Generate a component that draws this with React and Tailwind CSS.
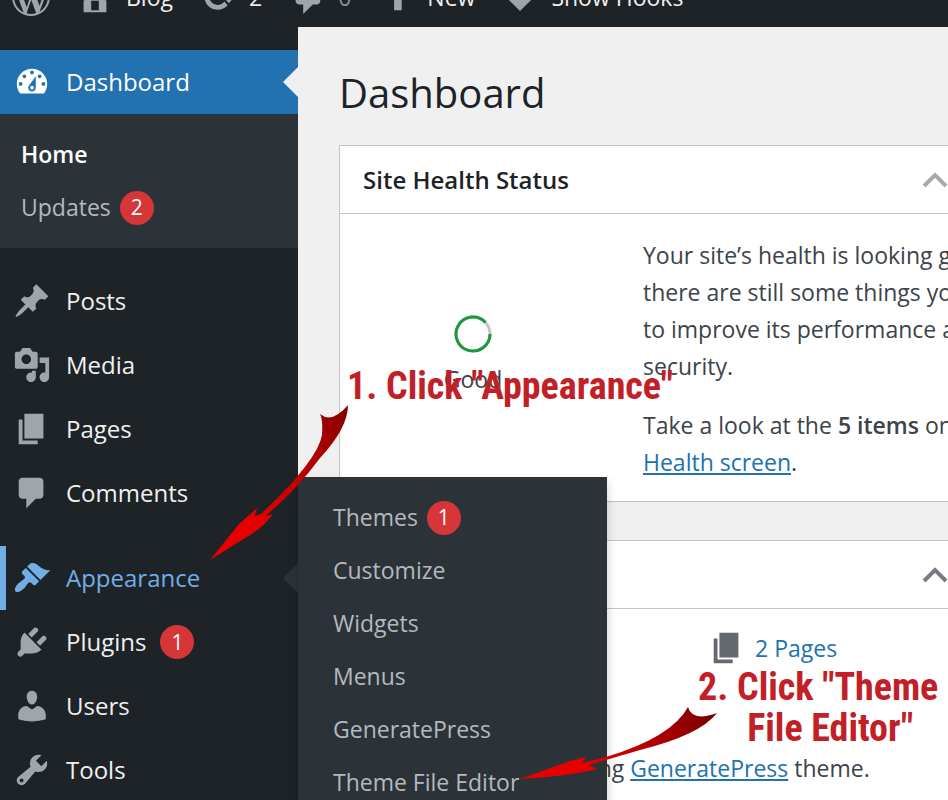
const ICONS = {
  wordpress:
    "M20 10c0-5.51-4.49-10-10-10C4.48 0 0 4.49 0 10c0 5.52 4.48 10 10 10 5.51 0 10-4.48 10-10zM7.78 15.37L4.37 6.22c.55-.02 1.17-.08 1.17-.08.5-.06.44-1.13-.06-1.11 0 0-1.45.11-2.37.11-.18 0-.37 0-.58-.01C4.12 2.69 6.87 1.11 10 1.11c2.33 0 4.45.87 6.05 2.34-.68-.11-1.65.39-1.65 1.58 0 .74.45 1.36.9 2.1.35.61.55 1.36.55 2.46 0 1.49-1.4 5-1.4 5l-3.03-8.37c.54-.02.82-.17.82-.17.5-.05.44-1.25-.06-1.22 0 0-1.44.12-2.38.12-.87 0-2.33-.12-2.33-.12-.5-.03-.56 1.2-.06 1.22l.92.08 1.26 3.41zM17.41 10c.24-.64.74-1.87.43-4.25.7 1.29 1.05 2.71 1.05 4.25 0 3.29-1.73 6.24-4.4 7.78.97-2.59 1.94-5.2 2.92-7.78zM6.1 18.09C3.12 16.65 1.11 13.53 1.11 10c0-1.3.23-2.48.72-3.59C3.25 10.3 4.67 14.2 6.1 18.09zm4.03-6.63l2.58 6.98c-.86.29-1.76.45-2.71.45-.79 0-1.57-.11-2.29-.33.81-2.38 1.62-4.74 2.42-7.1z",
  home: "M16 8.5l1.53 1.53-1.06 1.06L10 4.6l-6.47 6.49-1.06-1.06L10 2.5l4 4v-2h2v4zm-6-2.46l6 5.99V18H4v-5.97zM12 17v-5H8v5h4z",
  update:
    "M10.2 3.28c3.53 0 6.43 2.61 6.92 6h2.08l-3.5 4-3.5-4h2.32c-.45-1.97-2.21-3.45-4.32-3.45-1.45 0-2.73.71-3.54 1.78L4.95 5.66C6.23 4.2 8.11 3.28 10.2 3.28zm-.4 13.44c-3.52 0-6.43-2.61-6.92-6H.8l3.5-4c1.17 1.33 2.33 2.67 3.5 4H5.48c.45 1.97 2.21 3.45 4.32 3.45 1.45 0 2.73-.71 3.54-1.78l1.71 1.95c-1.28 1.46-3.15 2.38-5.25 2.38z",
  plus: "M17 7v3h-4v7H9v-7H4V7h5V2h4v5h4z",
  diamond: "M10 4.6L16.4 11 10 17.4 3.6 11z",
  barComment:
    "M6 3h9c1.1 0 2 .9 2 2v7c0 1.1-.9 2-2 2h-2l-5 5v-5H6c-1.1 0-2-.9-2-2V5c0-1.1.9-2 2-2z",
  dashboard:
    "M3.76 16h12.48c1.1-1.37 1.76-3.11 1.76-5 0-4.42-3.58-8-8-8s-8 3.58-8 8c0 1.89.66 3.63 1.76 5zM10 4c.55 0 1 .45 1 1s-.45 1-1 1-1-.45-1-1 .45-1 1-1zM6 6c.55 0 1 .45 1 1s-.45 1-1 1-1-.45-1-1 .45-1 1-1zm8 0c.55 0 1 .45 1 1s-.45 1-1 1-1-.45-1-1 .45-1 1-1zm-5.37 5.55L12 7v6c0 1.1-.9 2-2 2s-2-.9-2-2c0-.57.24-1.08.63-1.45zM4 10c.55 0 1 .45 1 1s-.45 1-1 1-1-.45-1-1 .45-1 1-1zm12 0c.55 0 1 .45 1 1s-.45 1-1 1-1-.45-1-1 .45-1 1-1zm-5 3c0-.55-.45-1-1-1s-1 .45-1 1 .45 1 1 1 1-.45 1-1z",
  post: "M10.44 3.02l1.82-1.82 6.36 6.35-1.83 1.82c-1.05-.68-2.48-.57-3.41.36l-.75.75c-.92.93-1.04 2.35-.35 3.41l-1.83 1.82-2.41-2.41-2.8 2.79c-.42.42-3.38 2.71-3.8 2.29s1.86-3.39 2.28-3.81l2.79-2.79L4.1 9.36l1.83-1.82c1.05.69 2.48.57 3.4-.36l.75-.75c.93-.92 1.05-2.35.36-3.41z",
  media:
    "M13 11V4c0-.55-.45-1-1-1h-1.67L9 1H5L3.67 3H2c-.55 0-1 .45-1 1v7c0 .55.45 1 1 1h10c.55 0 1-.45 1-1zM7 4.5c1.38 0 2.5 1.12 2.5 2.5S8.38 9.5 7 9.5 4.5 8.38 4.5 7 5.62 4.5 7 4.5zM14 6h5v10.5c0 1.38-1.12 2.5-2.5 2.5S14 17.88 14 16.5s1.12-2.5 2.5-2.5c.17 0 .34.02.5.05V9h-3V6zm-4 8.05V13h2v3.5c0 1.38-1.12 2.5-2.5 2.5S7 17.88 7 16.5 8.12 14 9.5 14c.17 0 .34.02.5.05z",
  page: "M6 15V2h10v13H6zm-1 1h8v2H3V5h2v11z",
  comment:
    "M5 2h9c1.1 0 2 .9 2 2v7c0 1.1-.9 2-2 2h-2l-5 5v-5H5c-1.1 0-2-.9-2-2V4c0-1.1.9-2 2-2z",
  appearance:
    "M14.48 11.06L7.41 3.99l1.5-1.5c.5-.56 2.3-.47 3.51.32 1.21.8 1.43 1.28 2.91 2.1 1.18.64 2.45 1.26 4.45.85zm-.71.71L6.7 4.7 4.93 6.47c-.39.39-.39 1.02 0 1.41l1.06 1.06c.39.39.39 1.03 0 1.42-.6.6-1.43 1.11-2.21 1.69-.35.26-.7.53-1.01.84C1.43 14.23.4 16.08 1.4 17.07c.99 1 2.84-.03 4.18-1.36.31-.31.58-.66.85-1.02.57-.78 1.08-1.61 1.69-2.21.39-.39 1.02-.39 1.41 0l1.06 1.06c.39.39 1.02.39 1.41 0z",
  plugins:
    "M13.11 4.36L9.87 7.6 8 5.73l3.24-3.24c.35-.34 1.05-.2 1.56.32.52.51.66 1.21.31 1.55zm-8 1.77l.91-1.12 9.01 9.01-1.19.84c-.71.71-2.63 1.16-3.82 1.16H6.14L4.9 17.26c-.59.59-1.54.59-2.12 0-.59-.58-.59-1.53 0-2.12l1.24-1.24v-3.88c0-1.13.4-3.19 1.09-3.89zm7.26 3.97l3.24-3.24c.34-.35 1.04-.21 1.55.31.52.51.66 1.21.31 1.55l-3.24 3.25z",
  users:
    "M10 9.25c-2.27 0-2.73-3.44-2.73-3.44C7 4.02 7.82 2 9.97 2c2.16 0 2.98 2.02 2.71 3.81 0 0-.41 3.44-2.68 3.44zm0 2.57L12.72 10c2.39 0 4.52 2.33 4.52 4.53v2.49s-3.65 1.13-7.24 1.13c-3.65 0-7.24-1.13-7.24-1.13v-2.49c0-2.25 1.94-4.48 4.47-4.48z",
  tools:
    "M16.68 9.77c-1.34 1.34-3.3 1.67-4.95.99l-5.41 6.52c-.99.99-2.59.99-3.58 0s-.99-2.59 0-3.57l6.52-5.42c-.68-1.65-.35-3.61.99-4.95 1.28-1.28 3.12-1.62 4.72-1.06l-2.89 2.89 2.82 2.82 2.86-2.87c.53 1.58.18 3.39-1.08 4.65zM3.81 16.21c.4.39 1.04.39 1.43 0 .4-.4.4-1.04 0-1.43-.39-.4-1.03-.4-1.43 0-.39.39-.39 1.03 0 1.43z",
};

function Icon({ name, className = "text-[#a0a5aa]" }) {
  return (
    <svg viewBox="0 0 20 20" className={`size-[38px] shrink-0 ${className}`} fill="currentColor" fillRule="evenodd" aria-hidden="true">
      <path d={ICONS[name]} />
    </svg>
  );
}

function Badge({ children }) {
  return (
    <span className="flex size-[34px] items-center justify-center rounded-full bg-[#d63638] text-[21px] leading-none text-white">
      {children}
    </span>
  );
}

function BarItem({ icon, label, muted }) {
  return (
    <a href="#" className="flex items-center gap-3">
      <Icon name={icon} />
      {label && <span className={muted ? "text-[#8b9096]" : "text-[#f0f0f1]"}>{label}</span>}
    </a>
  );
}

function MenuItem({ icon, label, badge }) {
  return (
    <li>
      <a href="#" className="flex h-16 items-center gap-[15px] pl-[13px] text-[#f0f0f1]">
        <Icon name={icon} />
        <span className="flex items-center gap-[14px]">
          {label}
          {badge && <Badge>{badge}</Badge>}
        </span>
      </a>
    </li>
  );
}

function SubItem({ label, badge, current }) {
  return (
    <li>
      <a
        href="#"
        className={`flex h-[53px] items-center gap-[9px] text-[23px] ${current ? "font-semibold text-white" : "text-[#b4b9be]"}`}
      >
        {label}
        {badge && <Badge>{badge}</Badge>}
      </a>
    </li>
  );
}

function Chevron() {
  return (
    <svg viewBox="0 0 26 16" className="h-4 w-[26px]" fill="none" stroke="currentColor" strokeWidth="4" aria-hidden="true">
      <path d="M2 14L13 3l11 11" />
    </svg>
  );
}

function Panel({ title, chevronClass, children }) {
  return (
    <section className="border border-r-0 border-[#c3c4c7] bg-white">
      <header className="flex h-[68px] items-center justify-between border-b border-[#c3c4c7] pl-[23px]">
        <h2 className="text-[24px] font-semibold text-[#1d2327]">{title}</h2>
        <button type="button" aria-label={`Toggle panel: ${title}`} className={chevronClass}>
          <Chevron />
        </button>
      </header>
      {children}
    </section>
  );
}

const NOTE =
  "absolute font-['Roboto_Condensed','Roboto',sans-serif] text-[38px] font-bold leading-[41px] whitespace-nowrap text-[#c22026]";

export default function App() {
  return (
    <div className="relative flex h-screen flex-col overflow-hidden bg-[#f0f0f1] font-['Open_Sans',sans-serif] text-[24px]">
      <div className="flex h-[27px] shrink-0 items-end overflow-hidden bg-[#1d2327]">
        <nav aria-label="Toolbar" className="flex h-[60px] shrink-0 items-center gap-[26px] pl-3 text-[23px] whitespace-nowrap">
          <BarItem icon="wordpress" />
          <BarItem icon="home" label="Blog" />
          <BarItem icon="update" label="2" />
          <BarItem icon="barComment" label="0" muted />
          <BarItem icon="plus" label="New" />
          <BarItem icon="diamond" label="Show Hooks" />
        </nav>
      </div>

      <div className="flex min-h-0 flex-1">
        <nav aria-label="Main menu" className="w-[298px] shrink-0 bg-[#1d2327] pt-[23px]">
          <ul>
            <li>
              <a href="#" className="relative flex h-16 items-center gap-[15px] bg-[#2271b1] pl-[13px] text-white">
                <Icon name="dashboard" className="text-white" />
                Dashboard
                <span className="absolute right-0 h-[30px] w-[15px] bg-[#f0f0f1] [clip-path:polygon(100%_0,0_50%,100%_100%)]" />
              </a>
              <ul className="bg-[#2c3338] pt-[14px] pb-[14px] pl-[21px]">
                <SubItem label="Home" current />
                <SubItem label="Updates" badge="2" />
              </ul>
            </li>
          </ul>
          <ul className="pt-[21px]">
            <MenuItem icon="post" label="Posts" />
            <MenuItem icon="media" label="Media" />
            <MenuItem icon="page" label="Pages" />
            <MenuItem icon="comment" label="Comments" />
          </ul>
          <ul className="pt-[21px]">
            <li className="relative">
              <a href="#" className="flex h-16 items-center gap-[15px] border-l-[6px] border-[#72aee6] pl-[7px] text-[#72aee6]">
                <Icon name="appearance" className="text-[#72aee6]" />
                Appearance
                <span className="absolute right-0 h-[30px] w-[15px] bg-[#2c3338] [clip-path:polygon(100%_0,0_50%,100%_100%)]" />
              </a>
              <ul className="absolute -top-[69px] left-full z-10 w-[309px] bg-[#2c3338] py-[14px] pl-[35px] shadow-[0_6px_10px_rgba(0,0,0,0.2)]">
                <SubItem label="Themes" badge="1" />
                <SubItem label="Customize" />
                <SubItem label="Widgets" />
                <SubItem label="Menus" />
                <SubItem label="GeneratePress" />
                <SubItem label="Theme File Editor" />
              </ul>
            </li>
            <MenuItem icon="plugins" label="Plugins" badge="1" />
            <MenuItem icon="users" label="Users" />
            <MenuItem icon="tools" label="Tools" />
          </ul>
        </nav>

        <main className="min-w-0 flex-1 overflow-hidden pl-[41px] text-[#3c434a]">
          <h1 className="pt-9 pb-[22px] text-[40px] leading-[60px] text-[#1d2327]">Dashboard</h1>
          <div className="flex flex-col gap-[38px]">
            <Panel title="Site Health Status" chevronClass="text-[#a7aaad]">
              <div className="flex pt-[23px] pb-5">
                <div className="flex w-[303px] shrink-0 flex-col items-center gap-[10px] pt-[78px] pr-[37px]">
                  <svg viewBox="0 0 38 38" className="size-[38px]" fill="none" strokeWidth="3" aria-hidden="true">
                    <circle cx="19" cy="19" r="17" stroke="#c3c4c7" />
                    <path d="M36 19A17 17 0 1 1 31.5 7.5" stroke="#1a9a3c" />
                  </svg>
                  <p className="text-[23px] leading-8">Good</p>
                </div>
                <div className="text-[23px] leading-[37px] whitespace-nowrap">
                  <p>
                    Your site’s health is looking good, but
                    <br />
                    there are still some things you can do
                    <br />
                    to improve its performance and
                    <br />
                    security.
                  </p>
                  <p className="pt-[22px]">
                    Take a look at the <strong className="font-semibold">5 items</strong> on the Site
                    <br />
                    <a href="#" className="text-[#2271b1] underline">Health screen</a>.
                  </p>
                </div>
              </div>
            </Panel>
            <Panel title="At a Glance" chevronClass="text-[#787c82]">
              <div className="flex flex-col gap-[84px] pt-5 pb-6 text-[23px]">
                <a href="#" className="flex items-center gap-[9px] pl-[368px] text-[#2271b1]">
                  <Icon name="page" className="text-[#646970]" />
                  2 Pages
                </a>
                <p className="pl-5 whitespace-nowrap">
                  WordPress 6.1.1 running <a href="#" className="text-[#2271b1] underline">GeneratePress</a> theme.
                </p>
              </div>
            </Panel>
          </div>
        </main>
      </div>

      <p className={`${NOTE} top-[366px] left-[347px] z-20`}>1. Click "Appearance"</p>
      <p className={`${NOTE} top-[667px] left-[698px] z-20 text-center`}>
        2. Click "Theme
        <span className="block pl-6">File Editor"</span>
      </p>
      <svg viewBox="0 0 948 800" className="pointer-events-none absolute top-0 left-0 z-20 h-[800px] w-[948px]" aria-hidden="true">
        <defs>
          <linearGradient id="arrowOne" gradientUnits="userSpaceOnUse" x1="340" y1="405" x2="250" y2="520">
            <stop offset="0" stopColor="#8a0000" />
            <stop offset="1" stopColor="#e60000" />
          </linearGradient>
          <linearGradient id="arrowTwo" gradientUnits="userSpaceOnUse" x1="715" y1="712" x2="590" y2="770">
            <stop offset="0" stopColor="#7a0000" />
            <stop offset="1" stopColor="#e60000" />
          </linearGradient>
        </defs>
        <path fill="url(#arrowOne)" d="M210 560L239 524L257 508L255 516L261 514Q318 460 322 435Q323 420 320 414Q332 424 348 405Q348 428 320 458Q295 492 265 516L273 514Q262 529 245 538Z" />
        <path fill="url(#arrowTwo)" d="M520 779L570 761L586 757L582 763L606 757Q672 737 688 707Q692 722 717 713Q700 735 640 750L589 765L597 769Q570 776 520 779Z" />
      </svg>
    </div>
  );
}
